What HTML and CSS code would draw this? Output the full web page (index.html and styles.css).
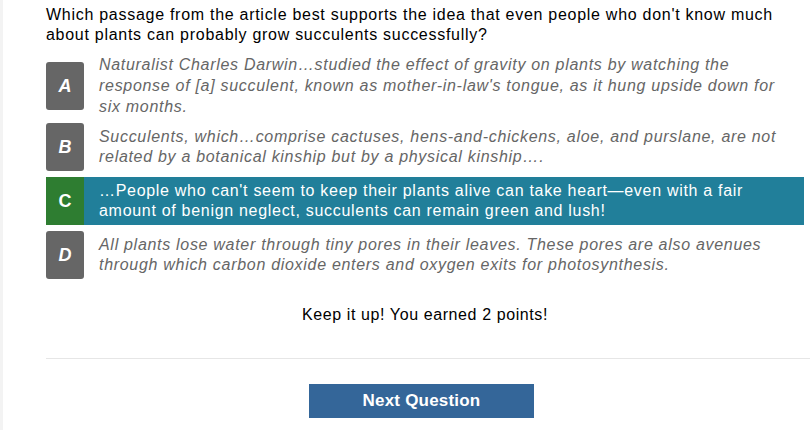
FILE: index.html
```html
<!DOCTYPE html>
<html>
<head>
<meta charset="utf-8">
<link rel="stylesheet" href="styles.css">
</head>
<body>
<div class="page">
  <div class="quiz">
    <p class="question">Which passage from the article best supports the idea that even people who don't know much about plants can probably grow succulents successfully?</p>
    <div class="options">
      <div class="option">
        <div class="badge">A</div>
        <div class="text">Naturalist Charles Darwin…studied the effect of gravity on plants by watching the response of [a] succulent, known as mother-in-law's tongue, as it hung upside down for six months.</div>
      </div>
      <div class="option">
        <div class="badge">B</div>
        <div class="text">Succulents, which…comprise cactuses, hens-and-chickens, aloe, and purslane, are not related by a botanical kinship but by a physical kinship….</div>
      </div>
      <div class="option selected">
        <div class="badge">C</div>
        <div class="text">…People who can't seem to keep their plants alive can take heart—even with a fair amount of benign neglect, succulents can remain green and lush!</div>
      </div>
      <div class="option">
        <div class="badge">D</div>
        <div class="text">All plants lose water through tiny pores in their leaves. These pores are also avenues through which carbon dioxide enters and oxygen exits for photosynthesis.</div>
      </div>
    </div>
    <p class="feedback">Keep it up! You earned 2 points!</p>
  </div>
  <hr class="divider">
  <div class="actions">
    <button class="next">Next Question</button>
  </div>
</div>
</body>
</html>
```

FILE: styles.css
```css
html, body {
  margin: 0;
  padding: 0;
  background: #ffffff;
}
body {
  font-family: "Liberation Sans", Arial, sans-serif;
  color: #000;
}
.page {
  border-left: 3px solid #f3f3f3;
  padding-left: 43px;
  padding-top: 5px;
  height: 425px;
  overflow: hidden;
}
.quiz {
  margin-right: 6px;
}
.question {
  margin: 0 0 10px 0;
  font-size: 16px;
  line-height: 20px;
  letter-spacing: 0.72px;
}
.options {
  display: flex;
  flex-direction: column;
  gap: 6px;
}
.option {
  display: flex;
  align-items: center;
  gap: 15px;
  min-height: 48px;
}
.badge {
  flex: none;
  width: 38px;
  height: 48px;
  border-radius: 3px;
  background: #666666;
  color: #fff;
  font-weight: bold;
  font-style: italic;
  font-size: 18px;
  display: flex;
  align-items: center;
  justify-content: center;
}
.text {
  font-size: 16px;
  line-height: 20.8px;
  letter-spacing: 0.7px;
  font-style: italic;
  color: #666666;
  padding-right: 14px;
}
.option.selected {
  background: #217f9a;
}
.option.selected .badge {
  background: #2e7d31;
  border-radius: 0;
  font-style: normal;
}
.option.selected .text {
  color: #fff;
  font-style: normal;
}
.feedback {
  margin: 26px 0 0 0;
  text-align: center;
  font-size: 16px;
  line-height: 20px;
  letter-spacing: 0.6px;
}
.divider {
  margin: 33px 0 0 0;
  border: 0;
  border-top: 1px solid #e6e6e6;
  height: 0;
}
.actions {
  display: flex;
  justify-content: center;
  padding-right: 13px;
  margin-top: 25px;
}
.next {
  width: 225px;
  height: 34px;
  border: 0;
  background: #346699;
  color: #fff;
  font-family: "Liberation Sans", Arial, sans-serif;
  font-weight: bold;
  font-size: 17px;
  letter-spacing: 0.2px;
  padding: 0;
}
```
